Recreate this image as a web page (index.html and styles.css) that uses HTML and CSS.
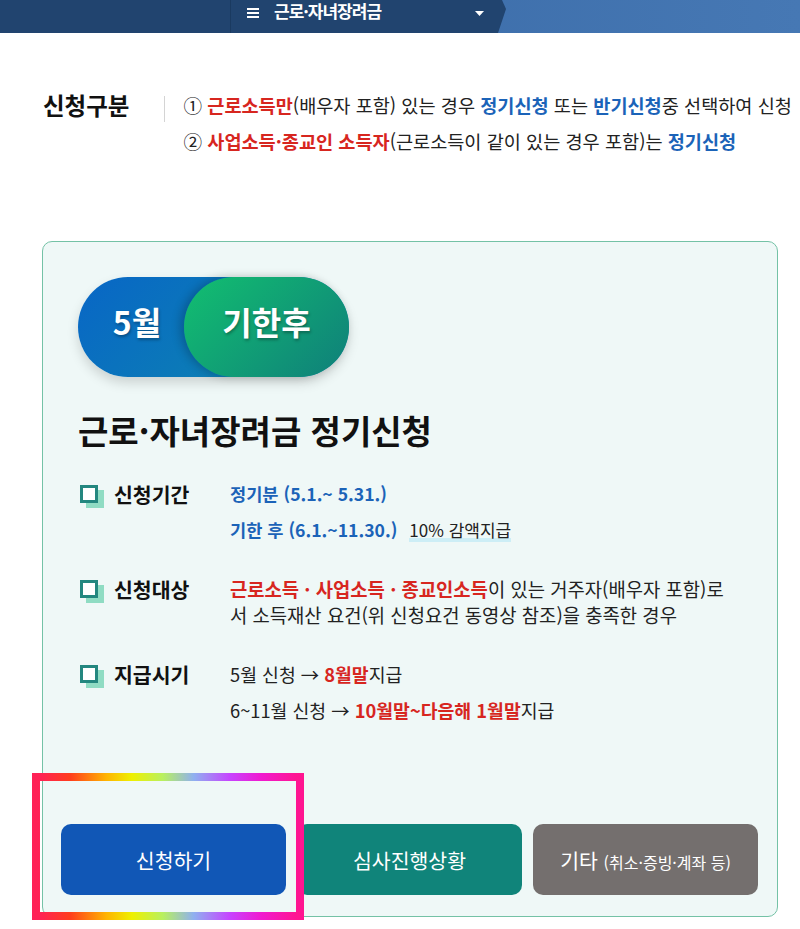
FILE: index.html
```html
<!DOCTYPE html>
<html lang="ko">
<head>
    <meta charset="UTF-8">
    <meta name="viewport" content="width=device-width, initial-scale=1.0">
    <title>근로·자녀장려금 정기신청</title>
    <link rel="stylesheet" href="styles.css">
</head>
<body>
    <!-- 상단 메뉴 -->
    <header class="topbar">
        <div class="topbar-home"></div>
        <div class="topbar-menu">
            <svg class="menu-icon" width="12" height="10" viewBox="0 0 12 10">
                <rect x="0" y="0" width="12" height="2" fill="#fff"/>
                <rect x="0" y="4" width="12" height="2" fill="#fff"/>
                <rect x="0" y="8" width="12" height="2" fill="#fff"/>
            </svg>
            <span class="menu-title">근로·자녀장려금</span>
            <svg class="menu-caret" width="9" height="5" viewBox="0 0 9 5">
                <polygon points="0,0 9,0 4.5,5" fill="#fff"/>
            </svg>
        </div>
    </header>

    <!-- 신청구분 -->
    <section class="apply-type">
        <h2 class="apply-type-title">신청구분</h2>
        <span class="apply-type-bar"></span>
        <ul class="apply-type-list">
            <li>① <b class="red">근로소득만</b>(배우자 포함) 있는 경우 <b class="blue">정기신청</b> 또는 <b class="blue">반기신청</b>중 선택하여 신청</li>
            <li>② <b class="red">사업소득·종교인 소득자</b>(근로소득이 같이 있는 경우 포함)는 <b class="blue">정기신청</b></li>
        </ul>
    </section>

    <!-- 정기신청 카드 -->
    <section class="card">
        <div class="card-body">
            <div class="badge">
                <span class="badge-month">5월</span>
                <span class="badge-late">기한후</span>
            </div>

            <h1 class="card-title">근로·자녀장려금 정기신청</h1>

            <div class="info-row">
                <div class="info-label"><i class="check"></i>신청기간</div>
                <div class="info-value period">
                    <p><b class="blue">정기분 (5.1.~ 5.31.)</b></p>
                    <p><b class="blue">기한 후 (6.1.~11.30.)</b><span class="mark">10% 감액지급</span></p>
                </div>
            </div>

            <div class="info-row">
                <div class="info-label"><i class="check"></i>신청대상</div>
                <div class="info-value target">
                    <p><b class="red">근로소득 · 사업소득 · 종교인소득</b>이 있는 거주자(배우자 포함)로<br>서 소득재산 요건(위 신청요건 동영상 참조)을 충족한 경우</p>
                </div>
            </div>

            <div class="info-row">
                <div class="info-label"><i class="check"></i>지급시기</div>
                <div class="info-value">
                    <p>5월 신청 → <b class="red">8월말</b>지급</p>
                    <p>6~11월 신청 → <b class="red">10월말~다음해 1월말</b>지급</p>
                </div>
            </div>
        </div>

        <div class="card-buttons">
            <div class="btn-wrap">
                <button class="btn btn-apply">신청하기</button>
                <span class="highlight-frame"></span>
            </div>
            <button class="btn btn-status">심사진행상황</button>
            <button class="btn btn-etc">기타 <small>(취소·증빙·계좌 등)</small></button>
        </div>
    </section>
</body>
</html>
```

FILE: styles.css
```css
body {
    margin: 0;
    padding: 0 0 12px 0;
    font-family: "Noto Sans CJK KR", "Noto Sans", sans-serif;
    color: #222;
    background-color: #ffffff;
    overflow: hidden;
}

b {
    font-weight: bold;
}

.red {
    color: #d7261f;
}

.blue {
    color: #1b63b8;
}

/* 상단 메뉴 */
.topbar {
    display: flex;
    height: 33px;
    background: linear-gradient(to right, #3565a2, #4678b4);
}

.topbar-home {
    width: 230px;
    background-color: #21446f;
    border-right: 1px solid #1a3a60;
}

.topbar-menu {
    width: 275px;
    display: flex;
    align-items: center;
    padding: 0 0 12px 16px;
    box-sizing: border-box;
    background-color: #21446f;
    clip-path: polygon(0 0, 271px 0, 275px 9px, 267px 100%, 0 100%);
}

.menu-icon {
    margin-top: 5px;
}

.menu-title {
    color: #fff;
    font-size: 17px;
    font-weight: bold;
    letter-spacing: -1px;
    margin-left: 15px;
}

.menu-caret {
    margin-left: 94px;
    margin-top: 5px;
}

/* 신청구분 */
.apply-type {
    display: flex;
    align-items: flex-start;
    margin-top: 54px;
    padding-left: 43px;
    white-space: nowrap;
}

.apply-type-title {
    margin: 0;
    font-size: 23.5px;
    line-height: 36px;
    font-weight: bold;
    color: #111;
}

.apply-type-bar {
    width: 1px;
    height: 26px;
    margin: 9px 18px 0 35px;
    background-color: #d4d4d4;
}

.apply-type-list {
    list-style: none;
    margin: 0;
    padding: 0;
    font-size: 18.6px;
    line-height: 36px;
}

/* 카드 */
.card {
    width: 736px;
    box-sizing: border-box;
    margin: 82px 0 0 42px;
    padding: 35px 19px 21px 18px;
    background-color: #eff8f7;
    border: 1px solid #74c2a6;
    border-radius: 10px;
}

.card-body {
    padding-left: 17px;
}

.badge {
    display: flex;
    width: 271px;
    height: 100px;
    border-radius: 50px;
    background: linear-gradient(135deg, #0866c6, #0e8aac);
    box-shadow: 0 6px 12px rgba(0, 0, 0, 0.15);
    color: #fff;
    font-weight: bold;
    text-shadow: 1px 2px 3px rgba(0, 0, 0, 0.3);
}

.badge span {
    display: flex;
    align-items: center;
    justify-content: center;
    padding-bottom: 12px;
    box-sizing: border-box;
}

.badge-month {
    flex: 1;
    padding-left: 12px;
    font-size: 32px;
}

.badge-late {
    width: 165px;
    border-radius: 50px;
    font-size: 32px;
    background: linear-gradient(135deg, #12bf70, #0f7f7a);
    box-shadow: -4px 0 10px rgba(0, 0, 0, 0.22);
}

.card-title {
    margin: 33px 0 0 0;
    font-size: 33px;
    line-height: 40px;
    font-weight: bold;
    color: #111;
}

.info-row {
    display: grid;
    grid-template-columns: 152px 1fr;
    margin-top: 33px;
}

.card-title + .info-row {
    margin-top: 31px;
}

.info-label {
    display: flex;
    align-items: flex-start;
    font-size: 20.5px;
    line-height: 26px;
    font-weight: bold;
    color: #111;
    padding-left: 2px;
}

.check {
    width: 18px;
    height: 18px;
    box-sizing: border-box;
    margin: 4px 16px 0 0;
    border: 3px solid #23877f;
    background-color: #fff;
    box-shadow: 6px 5px 0 0 #8fdcc3;
}

.info-value p {
    margin: 0;
    font-size: 18.3px;
    line-height: 26px;
}

.info-value p + p {
    margin-top: 10px;
}

.period p {
    font-size: 17.6px;
}

.target p {
    font-size: 18.8px;
}

.mark {
    margin-left: 12px;
    font-size: 17px;
    background: linear-gradient(to bottom, transparent calc(100% - 4px), #cdeef6 0);
}

/* 버튼 */
.card-buttons {
    display: grid;
    grid-template-columns: repeat(3, 225px);
    gap: 11px;
    margin-top: 101px;
}

.btn-wrap {
    position: relative;
    display: flex;
}

.btn {
    width: 225px;
    height: 71px;
    border: none;
    border-radius: 10px;
    color: #fff;
    font-family: inherit;
    font-size: 20.5px;
    cursor: pointer;
}

.btn-apply {
    background-color: #1157b6;
}

.btn-status {
    background-color: #10847a;
}

.btn-etc {
    background-color: #746f6e;
}

.btn-etc small {
    font-size: 16px;
}

/* 강조 테두리 */
.highlight-frame {
    position: absolute;
    top: -51px;
    left: -29px;
    right: -18px;
    bottom: -25px;
    border: 8px solid;
    border-image: linear-gradient(to right, #ff2157, #ff3d1d 12%, #ffb300 26%, #eef000 36%, #b8f060 48%, #8fb0f0 60%, #c644ff 74%, #f01ad0 86%, #ff1590) 1;
    pointer-events: none;
}
```
